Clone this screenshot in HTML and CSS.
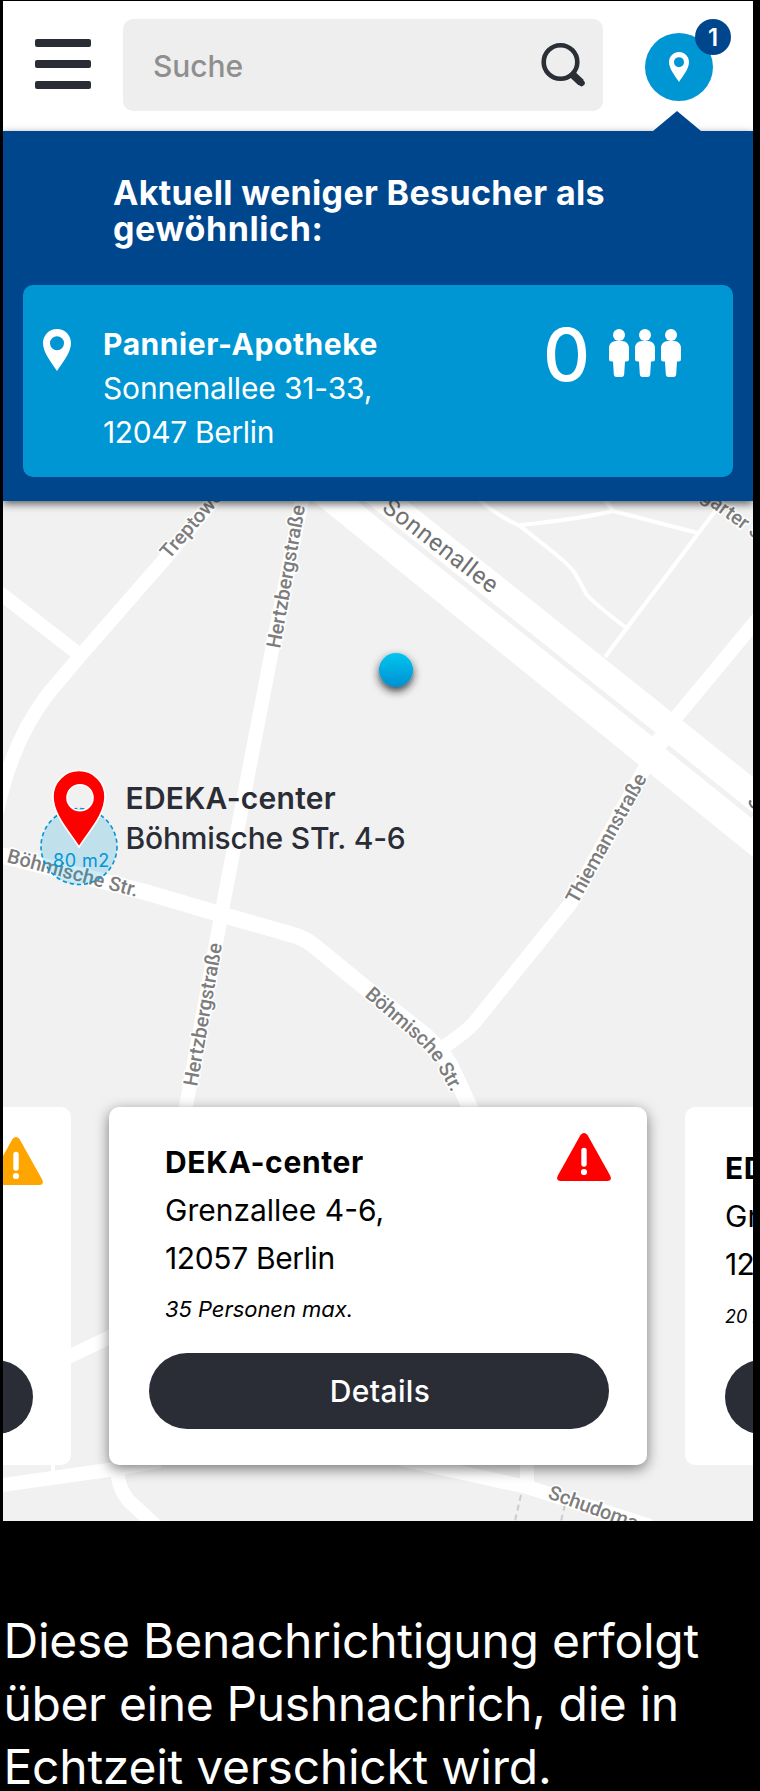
FILE: index.html
```
<!DOCTYPE html>
<html lang="de">
<head>
<meta charset="utf-8">
<title>Besucherkarte</title>
<link rel="stylesheet" href="styles.css">
</head>
<body>
<main class="phone">
  <header class="topbar">
    <div class="menu"><span class="menu-bar"></span><span class="menu-bar"></span><span class="menu-bar"></span></div>
    <div class="search">
      <span class="search-label">Suche</span>
      <svg class="search-icon" viewBox="0 0 46 46">
        <path d="M32.500 33.500L41 41.500" stroke="#2a2e35" stroke-width="7.500" stroke-linecap="butt"/>
        <path d="M39 39.500L41.500 42" stroke="#2a2e35" stroke-width="6.500" stroke-linecap="round"/>
        <circle cx="20.500" cy="21" r="16.800" fill="#eee" stroke="#2a2e35" stroke-width="4.600"/>
      </svg>
    </div>
    <div class="alert">
      <svg class="alert-pin" viewBox="0 0 28 42"><path fill-rule="evenodd" d="M14 0C6.200 0 0 6.200 0 14C0 24 9 34 14 42C19 34 28 24 28 14C28 6.200 21.800 0 14 0ZM14 7.200A7 7 0 1 1 14 21.200A7 7 0 1 1 14 7.200Z" fill="#fff"/></svg>
      <span class="badge">1</span>
    </div>
  </header>

  <section class="notice">
    <span class="notice-arrow"></span>
    <h1 class="notice-title"><span class="line">Aktuell weniger Besucher als</span><span class="line line-wide">gewöhnlich:</span></h1>
    <div class="place">
      <svg class="place-pin" viewBox="0 0 28 42"><path fill-rule="evenodd" d="M14 0C6.200 0 0 6.200 0 14C0 24 9 34 14 42C19 34 28 24 28 14C28 6.200 21.800 0 14 0ZM14 7.200A7 7 0 1 1 14 21.200A7 7 0 1 1 14 7.200Z" fill="#fff"/></svg>
      <div class="place-text">
        <strong class="place-name">Pannier-Apotheke</strong>
        <span class="line">Sonnenallee 31-33,</span>
        <span class="line tight">12047 Berlin</span>
      </div>
      <div class="count">0</div>
      <svg class="people" viewBox="0 0 72 48" fill="#fff">
        <defs><g id="person"><circle cx="10" cy="6" r="6"/><path d="M7 12H13C17 12 20 15 20 19V30Q20 32.500 17.500 32.500H16L15.200 45Q15 48 12.500 48H7.500Q5 48 4.800 45L4 32.500H2.500Q0 32.500 0 30V19C0 15 3 12 7 12Z"/></g></defs>
        <use href="#person"/><use href="#person" x="26"/><use href="#person" x="52"/>
      </svg>
    </div>
  </section>

  <section class="map">
    <svg class="map-canvas" viewBox="3 501 750 1020">
      <defs>
        <linearGradient id="dot" x1="0" y1="0" x2="0" y2="1"><stop offset="0" stop-color="#00c6ee"/><stop offset="1" stop-color="#0090d3"/></linearGradient>
        <filter id="dotShadow" x="-60%" y="-60%" width="220%" height="220%"><feDropShadow dx="0" dy="4" stdDeviation="4" flood-color="#201c28" flood-opacity=".85"/></filter>
        <path id="curve" d="M364 996L401 1028Q429 1051 436 1064L459 1106"/>
      </defs>
      <g class="roads">
        <path class="road" d="M225 486L163 561L80 656L48 694C28 720 8 758 -3 812"/>
        <path class="road" d="M-4 590L76 652"/>
        <path class="road" d="M304 490L272 650L224 900L219 927L185 1112"/>
        <path class="road wide" d="M-4 854L145 892L223 915L290 934Q306 938 318 949L368 990L425 1035Q447 1055 455 1075L472 1112"/>
        <path class="road" d="M652 755L571 903L478 1018Q470 1030 436 1052"/>
        <path class="road" d="M640 760L678 715L760 616"/>
        <path class="avenue" d="M313 501H407L753 777V857Z"/>
        <path class="median" d="M360 500L380 516.500L654 734.500M667 747L753 816"/>
        <path class="lane" d="M478 498Q492 513 520 526L553 552Q573 568 577 577L587 595Q595 604 625 627M520 525Q580 519 613 511L698 533M605 500L613 511M725 498L605 657"/>
        <path class="road" d="M60 1361L112 1336M-4 1486L115 1469L160 1461M117 1468Q118 1490 130 1502L156 1526M527 1462L527 1486"/>
        <path class="road" d="M400 1459L440 1468L527 1487L650 1526"/>
        <path class="lane" d="M53 1462V1474"/>
        <path class="track" d="M521 1495L515 1521M565 1505L561 1521"/>
      </g>
      <g class="street">
        <text transform="translate(169 560) rotate(-49)">Treptower Str.</text>
        <text transform="translate(280 649) rotate(-80)" textLength="145">Hertzbergstraße</text>
        <text transform="translate(197 1087) rotate(-80)" textLength="145">Hertzbergstraße</text>
        <text class="street-big" transform="translate(381 510) rotate(37.500)" textLength="138">Sonnenallee</text>
        <text class="street-big" transform="translate(746 803) rotate(38)">Sonnenallee</text>
        <text transform="translate(577 905) rotate(-61)" textLength="145">Thiemannstraße</text>
        <text transform="translate(6 862) rotate(15)" textLength="135">Böhmische Str.</text>
        <text><textPath href="#curve" textLength="132">Böhmische Str.</textPath></text>
        <text transform="translate(700 499) rotate(36)" textLength="88">garter Str.</text>
        <text transform="translate(547 1498) rotate(20)" textLength="150">Schudomastraße</text>
      </g>
      <circle cx="79" cy="846.500" r="38" fill="#00a0dc" fill-opacity=".2" stroke="#0096d6" stroke-width="1.600" stroke-dasharray="4.200 3"/>
      <path fill-rule="evenodd" d="M79 770.500C64.500 770.500 53 782 53 796.500C53 815 69 831 79 847C89 831 105 815 105 796.500C105 782 93.500 770.500 79 770.500ZM80 784.700A13 13 0 1 1 80 810.700A13 13 0 1 1 80 784.700Z" fill="#f00" stroke="#fff" stroke-width="1.600"/>
      <text class="area" x="53" y="866.500">80 m2</text>
      <text class="pin-name" x="125.500" y="808.700">EDEKA-center</text>
      <text class="pin-address" x="125.500" y="849">Böhmische STr. 4-6</text>
      <circle cx="396" cy="670" r="17" fill="url(#dot)" filter="url(#dotShadow)"/>
    </svg>

    <div class="carousel">
      <article class="card card-side card-prev">
        <svg class="warn" viewBox="0 0 54 48"><path d="M23.500 2Q27 -2 30.500 2L53.400 43Q55 48 50.500 48H3.500Q-1 48 .6 43Z" fill="#ffa500"/><path d="M27 17.500L27 31" stroke="#fff" stroke-width="5.400" stroke-linecap="round"/><circle cx="27" cy="39" r="3.100" fill="#fff"/></svg>
        <span class="button"></span>
      </article>
      <article class="card card-main">
        <svg class="warn" viewBox="0 0 54 48"><path d="M23.500 2Q27 -2 30.500 2L53.400 43Q55 48 50.500 48H3.500Q-1 48 .6 43Z" fill="#f00"/><path d="M27 17.500L27 31" stroke="#fff" stroke-width="5.400" stroke-linecap="round"/><circle cx="27" cy="39" r="3.100" fill="#fff"/></svg>
        <div class="card-text">
          <strong class="card-name">DEKA-center</strong>
          <span class="line">Grenzallee 4-6,</span>
          <span class="line tight">12057 Berlin</span>
          <em class="capacity">35 Personen max.</em>
        </div>
        <span class="button">Details</span>
      </article>
      <article class="card card-side card-next">
        <div class="card-text">
          <strong class="card-name">EDEKA-center</strong>
          <span class="line">Grenzallee 4-6,</span>
          <span class="line tight">12057 Berlin</span>
          <em class="capacity">20 Personen max.</em>
        </div>
        <span class="button"></span>
      </article>
    </div>
  </section>
</main>
<p class="caption"><span class="line">Diese Benachrichtigung erfolgt</span><span class="line line-close">über eine Pushnachrich, die in</span><span class="line">Echtzeit verschickt wird.</span></p>
</body>
</html>
```
FILE: styles.css
```
* { box-sizing: border-box; }

body {
  margin: 0;
  height: 1791px;
  overflow: hidden;
  background: #000;
  font-family: Inter, "Liberation Sans", sans-serif;
}

.line { display: block; white-space: nowrap; }

.phone {
  width: 750px;
  margin: 0 0 0 3px;
  padding-top: 1px;
}

/* Top bar */
.topbar {
  display: flex;
  align-items: flex-start;
  height: 130px;
  padding: 18px 0 0 32px;
  background: #fff;
}

.menu {
  display: flex;
  flex-direction: column;
  gap: 13px;
  width: 56px;
  margin: 20px 32px 0 0;
}

.menu-bar { height: 8px; border-radius: 2px; background: #2a2d35; }

.search {
  display: flex;
  justify-content: space-between;
  align-items: center;
  width: 480px;
  height: 92px;
  padding: 0 17px 0 30px;
  border-radius: 10px;
  background: #eee;
}

.search-label {
  padding-top: 2px;
  color: #8f8f8f;
  font-size: 30px;
  font-weight: 450;
  letter-spacing: -0.1px;
}

.search-icon { width: 46px; height: 46px; margin-top: -3px; fill: none; }

.alert {
  position: relative;
  display: flex;
  justify-content: center;
  width: 68px;
  height: 68px;
  margin: 14px 0 0 42px;
  padding-top: 18px;
  border-radius: 50%;
  background: #0096d3;
}

.alert-pin { width: 20px; height: 32px; }

.badge {
  position: absolute;
  top: -14px;
  right: -18px;
  width: 36px;
  height: 36px;
  border-radius: 50%;
  background: #00468c;
  color: #fff;
  font-size: 24px;
  font-weight: 600;
  line-height: 38px;
  text-align: center;
}

/* Notice panel */
.notice {
  position: relative;
  z-index: 1;
  height: 370px;
  padding: 44px 20px 0;
  background: #00468c;
  box-shadow: 0 3px 8px rgba(0, 0, 0, .6);
}

.notice-arrow {
  position: absolute;
  top: -20px;
  left: 650px;
  width: 48px;
  height: 20px;
  background: #00468c;
  clip-path: polygon(50% 0, 100% 100%, 0 100%);
}

.notice-title {
  margin: 0 0 38px 90px;
  color: #fff;
  font-size: 34px;
  font-weight: 700;
  line-height: 36px;
  letter-spacing: .34px;
}

.line-wide { letter-spacing: .6px; }

.place {
  display: flex;
  align-items: flex-start;
  height: 192px;
  padding: 37px 52px 0 20px;
  border-radius: 10px;
  background: #0096d3;
  color: #fff;
}

.place-pin { width: 28px; height: 42px; margin: 7px 32px 0 0; }

.place-text {
  flex: 1;
  font-size: 30px;
  line-height: 44px;
  letter-spacing: -0.15px;
}

.place-name { display: block; letter-spacing: .57px; }

.count {
  margin: -3px 19px 0 0;
  font-size: 73px;
  font-weight: 450;
  line-height: 72px;
}

.people { width: 72px; height: 48px; margin-top: 7px; }

/* Map */
.map {
  position: relative;
  height: 1020px;
  padding-top: 606px;
  overflow: hidden;
  background: #f1f1f1;
}

.map-canvas { position: absolute; inset: 0; width: 750px; height: 1020px; }

.roads path { fill: none; stroke: #fff; stroke-linejoin: round; }
.roads .road { stroke-width: 14px; }
.roads .wide { stroke-width: 16px; }
.roads .lane { stroke-width: 4px; }
.roads .avenue { fill: #fff; stroke: none; }
.roads .median { stroke: #f1f1f1; stroke-width: 5px; }
.roads .track { stroke: #ccc; stroke-width: 2px; stroke-dasharray: 6 4; }

.street text {
  fill: #7d7d7d;
  stroke: #fff;
  stroke-width: 3px;
  paint-order: stroke;
  font: 500 20px Roboto, sans-serif;
}

.street .street-big { font-size: 24px; font-weight: 400; fill: #707070; }

.area { fill: #0096d6; font-size: 18px; letter-spacing: .5px; }
.pin-name { fill: #2a2d35; font-size: 30px; font-weight: 600; letter-spacing: .25px; }
.pin-address { fill: #2a2d35; font-size: 30px; font-weight: 500; letter-spacing: -0.19px; }

/* Cards over the map */
.carousel {
  position: relative;
  display: flex;
  gap: 38px;
  width: 1690px;
  margin-left: -470px;
}

.card {
  position: relative;
  flex: none;
  width: 538px;
  height: 358px;
  padding: 31px 38px 0 40px;
  border-radius: 10px;
  background: #fff;
  color: #000;
}

.card-main { box-shadow: 0 4px 14px rgba(0, 0, 0, .5); }
.card-side { padding-top: 37px; }
.card-prev { padding-top: 253px; }

.warn { position: absolute; top: 26px; right: 36px; width: 54px; height: 48px; }
.card-prev .warn { top: 30px; right: 28px; }

.card-text {
  height: 215px;
  padding-left: 16px;
  font-size: 30px;
  line-height: 48px;
}

.card-side .card-text { height: 216px; padding-left: 0; }

.card-name { display: block; letter-spacing: .64px; }
.tight { letter-spacing: -0.36px; }
.card-next .tight { letter-spacing: -0.8px; }
.capacity { display: block; padding-top: 3px; font-size: 22px; font-weight: 450; letter-spacing: -0.05px; }
.card-side .capacity { padding-top: 5px; font-size: 18px; }

.button {
  display: block;
  height: 76px;
  padding-left: 2px;
  border-radius: 38px;
  background: #2a2d35;
  color: #fff;
  font-size: 30px;
  font-weight: 500;
  line-height: 76px;
  letter-spacing: .37px;
  text-align: center;
}

.card-side .button { height: 74px; }

.caption {
  margin: 88px 0 0 3.500px;
  color: #fff;
  font-size: 48px;
  line-height: 63px;
  letter-spacing: -0.25px;
}

.line-close { letter-spacing: -0.38px; }
```
